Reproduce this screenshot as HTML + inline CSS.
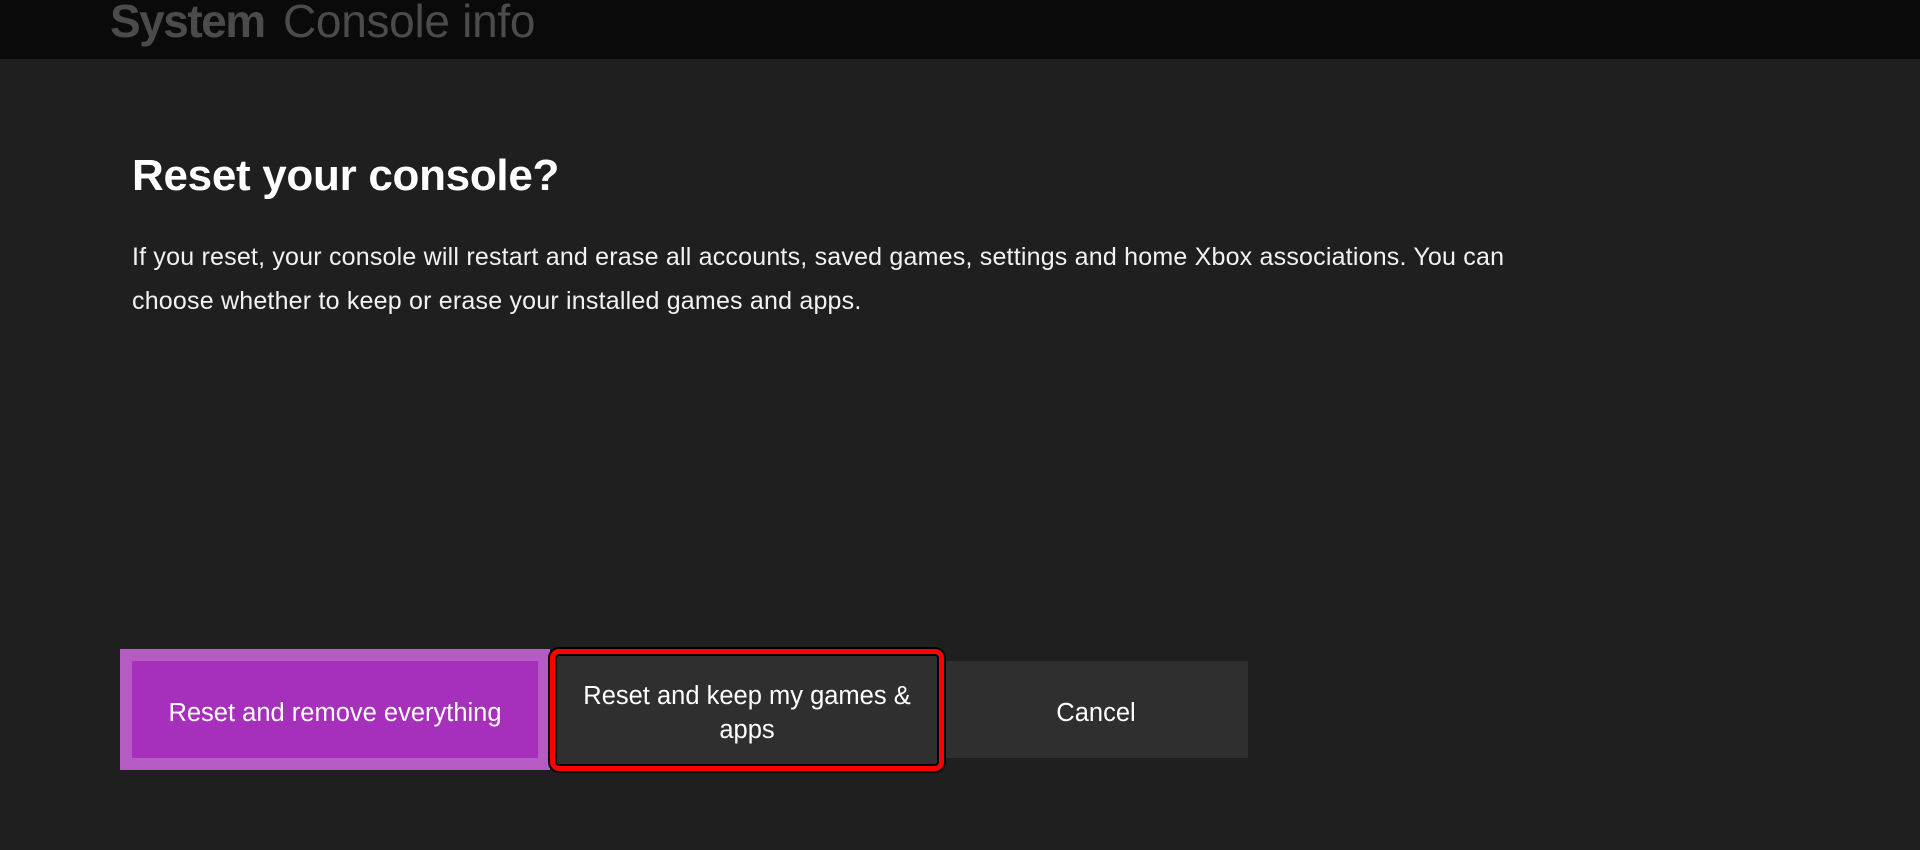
<!DOCTYPE html>
<html><head><meta charset="utf-8"><style>
html,body{margin:0;padding:0;width:1920px;height:850px;background:#1f1f1f;overflow:hidden;font-family:"Liberation Sans",sans-serif;color:#fff}
.hdr{position:absolute;left:0;top:0;width:1920px;height:59px;background:#0a0a0a}
.hdr span{position:absolute;top:-6px;font-size:46px;color:#4b4b4b;white-space:nowrap}
h1{position:absolute;left:132px;top:151px;margin:0;font-size:44px;font-weight:bold;letter-spacing:-0.3px}
p{position:absolute;left:132px;top:235px;margin:0;width:1400px;font-size:25px;line-height:44px;color:#f2f2f2;letter-spacing:0.2px}
.b{position:absolute;display:flex;align-items:center;justify-content:center;text-align:center;font-size:25.5px;line-height:34px;box-sizing:border-box;padding-top:6px}
</style></head><body>
<div class="hdr"><span style="left:110px;font-weight:bold;letter-spacing:-1.5px">System</span><span style="left:283px;letter-spacing:-0.3px">Console info</span></div>
<h1>Reset your console?</h1>
<p>If you reset, your console will restart and erase all accounts, saved games, settings and home Xbox associations. You can choose whether to keep or erase your installed games and apps.</p>
<div class="b" style="left:120px;top:649px;width:430px;height:121px;background:#b65bc4"></div>
<div class="b" style="left:132px;top:661px;width:406px;height:97px;background:#a62fbb">Reset and remove everything</div>
<div class="b" style="left:944px;top:661px;width:304px;height:97px;background:#2f2f2f">Cancel</div>
<div class="b" style="left:550px;top:649px;width:394px;height:122px;background:#2f2f2f;border:5px solid #f00;border-radius:9px;box-shadow:0 0 0 2px #000,inset 0 0 0 2px #000;padding:6px 22px 0">Reset and keep my games &amp; apps</div>
</body></html>
